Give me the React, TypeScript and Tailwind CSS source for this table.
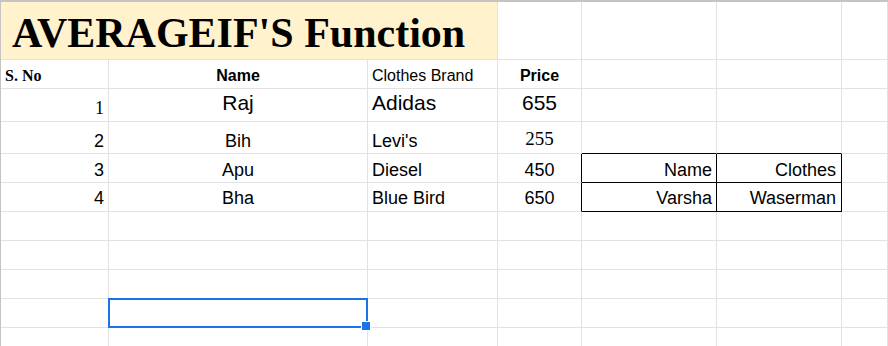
import React from 'react';
import clsx from 'clsx';

const sans = "font-['Liberation_Sans',Arial,sans-serif]";
const serif = "font-['Liberation_Serif','Times_New_Roman',serif]";

type CellProps = {
  children?: React.ReactNode;
  className?: string;
  edgeRight?: boolean;
  edgeBottom?: boolean;
};

// one sheet cell; grid lines are the right and bottom borders
function Cell({ children, className, edgeRight, edgeBottom }: CellProps) {
  return (
    <div
      className={clsx(
        'flex items-end overflow-hidden whitespace-nowrap border-r border-b text-black leading-none',
        edgeRight ? 'border-r-black' : 'border-r-[#e2e2e2]',
        edgeBottom ? 'border-b-black' : 'border-b-[#e2e2e2]',
        className,
      )}
    >
      {children}
    </div>
  );
}

const clothes = [
  { no: '2', name: 'Bih', brand: "Levi's", price: '255' },
  { no: '3', name: 'Apu', brand: 'Diesel', price: '450' },
  { no: '4', name: 'Bha', brand: 'Blue Bird', price: '650' },
];

export default function App() {
  return (
    <div className="relative w-[888px] h-[346px] overflow-hidden bg-white">
      <div className="grid grid-cols-[108px_259px_130px_84px_135px_125px_1fr] grid-rows-[58px_29px_33px_32px_29px_29px_29px_29px_29px_29px_29px] border-t-2 border-l border-[#c4c4c4]">
        {/* title */}
        <Cell className="col-span-3 bg-[#fff2cc] pl-[11px] pb-[5px]">
          <span className={clsx(serif, 'text-[42px] font-bold')}>AVERAGEIF'S Function</span>
        </Cell>
        <Cell />
        <Cell />
        <Cell />
        <Cell />

        {/* headers */}
        <Cell className={clsx(serif, 'pl-[4px] pb-[4px] text-[16px] font-bold')}>S. No</Cell>
        <Cell className={clsx(sans, 'justify-center pb-[4px] text-[16px] font-bold')}>Name</Cell>
        <Cell className={clsx(sans, 'pl-[4px] pb-[4px] text-[16px]')}>Clothes Brand</Cell>
        <Cell className={clsx(sans, 'justify-center pb-[4px] text-[16px] font-bold')}>Price</Cell>
        <Cell />
        <Cell />
        <Cell />

        {/* first entry */}
        <Cell className={clsx(serif, 'justify-end pr-[4px] pb-[4px] text-[18px]')}>1</Cell>
        <Cell className={clsx(sans, 'justify-center pb-[8px] text-[21px]')}>Raj</Cell>
        <Cell className={clsx(sans, 'pl-[4px] pb-[8px] text-[21px]')}>Adidas</Cell>
        <Cell className={clsx(sans, 'justify-center pb-[8px] text-[21px]')}>655</Cell>
        <Cell />
        <Cell />
        <Cell />

        {/* remaining entries, with the small lookup box beside rows 3 and 4 */}
        {clothes.map((row, i) => {
          const pb = i === 2 ? 'pb-[4px]' : 'pb-[3px]';
          return (
            <React.Fragment key={row.no}>
              <Cell className={clsx(sans, 'justify-end pr-[4px] text-[18px]', pb)}>{row.no}</Cell>
              <Cell className={clsx(sans, 'justify-center text-[18px]', pb)}>{row.name}</Cell>
              <Cell className={clsx(sans, 'pl-[4px] text-[18px]', pb)}>{row.brand}</Cell>
              {i === 0 ? (
                <Cell className={clsx(serif, 'justify-center pb-[5px] text-[19px]')}>{row.price}</Cell>
              ) : (
                <Cell edgeRight className={clsx(sans, 'justify-center text-[18px]', pb)}>
                  {row.price}
                </Cell>
              )}
              {i === 0 && (
                <>
                  <Cell edgeBottom />
                  <Cell edgeBottom />
                </>
              )}
              {i === 1 && (
                <>
                  <Cell edgeRight edgeBottom className={clsx(sans, 'justify-end pr-[4px] text-[18px]', pb)}>
                    Name
                  </Cell>
                  <Cell edgeRight edgeBottom className={clsx(sans, 'justify-end pr-[5px] text-[18px]', pb)}>
                    Clothes
                  </Cell>
                </>
              )}
              {i === 2 && (
                <>
                  <Cell edgeRight edgeBottom className={clsx(sans, 'justify-end pr-[4px] text-[18px]', pb)}>
                    Varsha
                  </Cell>
                  <Cell edgeRight edgeBottom className={clsx(sans, 'justify-end pr-[5px] text-[18px]', pb)}>
                    Waserman
                  </Cell>
                </>
              )}
              <Cell />
            </React.Fragment>
          );
        })}

        {/* empty rows */}
        {Array.from({ length: 35 }).map((_, i) => (
          <Cell key={`empty-${i}`} />
        ))}
      </div>

      {/* active cell selection */}
      <div className="absolute left-[108px] top-[298px] w-[260px] h-[30px] border-2 border-[#1a73e8]" />
      <div className="absolute left-[361px] top-[321px] w-[10px] h-[10px] border border-white bg-[#1a73e8]" />
    </div>
  );
}
